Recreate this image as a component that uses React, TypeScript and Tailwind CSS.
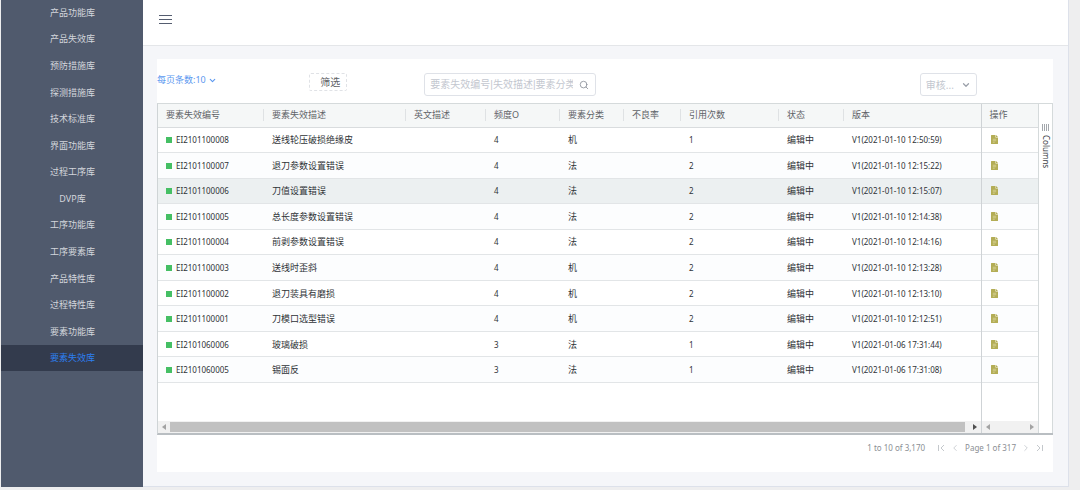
import { ChevronDown, ChevronLeft, ChevronRight, Search } from "lucide-react";

const menuItems = [
  "产品功能库",
  "产品失效库",
  "预防措施库",
  "探测措施库",
  "技术标准库",
  "界面功能库",
  "过程工序库",
  "DVP库",
  "工序功能库",
  "工序要素库",
  "产品特性库",
  "过程特性库",
  "要素功能库",
  "要素失效库",
];

const activeItem = "要素失效库";

const columns = [
  { title: "要素失效编号", width: "w-[106px]" },
  { title: "要素失效描述", width: "w-[142px]" },
  { title: "英文描述", width: "w-[80px]" },
  { title: "频度O", width: "w-[74px]" },
  { title: "要素分类", width: "w-[64px]" },
  { title: "不良率", width: "w-[57px]" },
  { title: "引用次数", width: "w-[98px]" },
  { title: "状态", width: "w-[65px]" },
  { title: "版本", width: "" },
];

const rows = [
  { id: "EI2101100008", desc: "送线轮压破损绝缘皮", freq: 4, type: "机", refs: 1, version: "V1(2021-01-10 12:50:59)" },
  { id: "EI2101100007", desc: "退刀参数设置错误", freq: 4, type: "法", refs: 2, version: "V1(2021-01-10 12:15:22)" },
  { id: "EI2101100006", desc: "刀值设置错误", freq: 4, type: "法", refs: 2, version: "V1(2021-01-10 12:15:07)", hover: true },
  { id: "EI2101100005", desc: "总长度参数设置错误", freq: 4, type: "法", refs: 2, version: "V1(2021-01-10 12:14:38)" },
  { id: "EI2101100004", desc: "前剥参数设置错误", freq: 4, type: "法", refs: 2, version: "V1(2021-01-10 12:14:16)" },
  { id: "EI2101100003", desc: "送线时歪斜", freq: 4, type: "机", refs: 2, version: "V1(2021-01-10 12:13:28)" },
  { id: "EI2101100002", desc: "退刀装具有磨损", freq: 4, type: "机", refs: 2, version: "V1(2021-01-10 12:13:10)" },
  { id: "EI2101100001", desc: "刀模口选型错误", freq: 4, type: "机", refs: 2, version: "V1(2021-01-10 12:12:51)" },
  { id: "EI2101060006", desc: "玻璃破损", freq: 3, type: "法", refs: 1, version: "V1(2021-01-06 17:31:44)" },
  { id: "EI2101060005", desc: "锡面反", freq: 3, type: "法", refs: 1, version: "V1(2021-01-06 17:31:08)" },
];

function DocIcon() {
  return (
    <svg viewBox="0 0 14 18" className="block h-[9px] w-[7px]">
      <path d="M1 0h8v5h5v12a1 1 0 0 1-1 1H1a1 1 0 0 1-1-1V1a1 1 0 0 1 1-1z" fill="#b3ad55" />
      <path d="M10 0l4 4h-4z" fill="#b3ad55" />
      <path d="M3.5 8.5h7M3.5 11.5h7M3.5 14.5h4" stroke="#e4e1ae" strokeWidth="1.2" />
    </svg>
  );
}

function Arrow({ dir, color }: { dir: "left" | "right"; color: string }) {
  return (
    <svg viewBox="0 0 4 6" className="h-[6px] w-1" fill={color}>
      <path d={dir === "left" ? "M4 0v6L0 3z" : "M0 0v6l4-3z"} />
    </svg>
  );
}

function Sidebar() {
  return (
    <aside className="w-[142px] shrink-0 bg-[#505a6d]">
      <nav className="-mt-px flex h-[372px] flex-col">
        {menuItems.map((item) => (
          <a
            key={item}
            href="#"
            className={
              item === activeItem
                ? "flex flex-1 items-center justify-center bg-[#333b4d] pt-px pl-px text-[#2d7ff0]"
                : "flex flex-1 items-center justify-center pt-px pl-px text-[#d3d6dc]"
            }
          >
            {item}
          </a>
        ))}
      </nav>
    </aside>
  );
}

function Toolbar() {
  return (
    <div className="grid h-[44px] grid-cols-[152fr_115fr_495fr_133fr] items-start pt-[14px]">
      <button className="flex h-[14px] items-center gap-[2px] justify-self-start text-[#5b98f0]">
        每页条数:10
        <ChevronDown size={9} strokeWidth={3} />
      </button>
      <button className="flex h-[18px] w-[38px] items-center justify-end justify-self-start rounded-[2px] border border-dashed border-[#e0e2e6] pr-[6px] text-[10px] text-[#606266]">
        筛选
      </button>
      <div className="flex h-[23px] w-[172px] items-center rounded-[3px] border border-[#dfe2e8] pl-[5px]">
        <input
          type="text"
          aria-label="搜索"
          placeholder="要素失效编号|失效描述|要素分类"
          className="w-[143px] font-['Liberation_Sans','Noto_Sans_CJK_SC',sans-serif] text-[10px] outline-none placeholder:text-[#c3c7cf]"
        />
        <button aria-label="搜索" className="ml-[6px] text-[#8a8f99]">
          <Search size={10} strokeWidth={2} />
        </button>
      </div>
      <div className="relative w-[57px]">
        <select
          aria-label="审核状态"
          className="h-[23px] w-full appearance-none rounded-[3px] border border-[#dfe2e8] bg-white pl-[5px] text-[10px] text-[#c3c7cf] outline-none"
        >
          <option>审核...</option>
        </select>
        <ChevronDown size={10} strokeWidth={3} className="pointer-events-none absolute right-[6px] top-[7px] text-[#9ba0aa]" />
      </div>
    </div>
  );
}

function DataTable() {
  return (
    <table className="h-[279px] w-full table-fixed border-collapse text-left">
      <thead className="bg-[#f5f7f7] text-[#5f6368]">
        <tr className="h-[23px] border-b border-[#d9dcde]">
          {columns.map(({ title, width }, i) => (
            <th key={title} className={`${width} p-0 font-normal`}>
              <div
                className={
                  i < columns.length - 1
                    ? "flex h-3 items-center border-r border-[#dfe2e4] pl-2"
                    : "flex h-3 items-center pl-2"
                }
              >
                {title}
              </div>
            </th>
          ))}
          <th className="w-[57px] border-l border-[#cfd3d6] p-0 pl-2 font-normal">操作</th>
        </tr>
      </thead>
      <tbody className="text-[#2f3337]">
        {rows.map((row) => (
          <tr
            key={row.id}
            className={
              row.hover
                ? "border-b border-[#e2e5e7] bg-[#ecf0f1]"
                : "border-b border-[#e2e5e7] even:bg-[#fcfdfe]"
            }
          >
            <td className="p-0 pt-px pl-2">
              <div className="flex items-center gap-1 text-[8px]">
                <span className="size-[6px] bg-[#45bf64]" />
                {row.id}
              </div>
            </td>
            <td className="p-0 pt-px pl-2">{row.desc}</td>
            <td />
            <td className="p-0 pt-px pl-2 text-[8px]">{row.freq}</td>
            <td className="p-0 pt-px pl-2">{row.type}</td>
            <td />
            <td className="p-0 pt-px pl-2 text-[8px]">{row.refs}</td>
            <td className="p-0 pt-px pl-2">编辑中</td>
            <td className="p-0 pt-px pl-2 text-[8px]">{row.version}</td>
            <td className="border-l border-[#cfd3d6] p-0 pl-[9px]">
              <button aria-label="查看" className="block">
                <DocIcon />
              </button>
            </td>
          </tr>
        ))}
      </tbody>
    </table>
  );
}

function Grid() {
  return (
    <div className="flex flex-1 border-t border-b-2 border-l border-t-[#d5dadb] border-b-[#b9bec2] border-l-[#cfd4d6]">
      <div className="flex min-w-0 flex-1 flex-col">
        <DataTable />
        <div className="flex flex-1">
          <div className="flex-1" />
          <div className="w-[57px] border-l border-[#cfd3d6]" />
        </div>
        <div className="flex h-[12px] bg-[#f1f1f1]">
          <div className="flex flex-1 items-center pr-1 pl-1">
            <Arrow dir="left" color="#a3a3a3" />
            <div className="mx-1 h-[10px] flex-1 bg-[#c1c1c1]" />
            <div className="pl-1">
              <Arrow dir="right" color="#505050" />
            </div>
          </div>
          <div className="flex w-[57px] items-center justify-between border-l border-[#cfd3d6] px-1">
            <Arrow dir="left" color="#a3a3a3" />
            <Arrow dir="right" color="#a3a3a3" />
          </div>
        </div>
      </div>
      <div className="w-[15px] border-x border-[#d5dadb] pt-5">
        <button className="flex w-full flex-col items-center gap-1 text-[#3c4046]">
          <svg viewBox="0 0 8 7" className="h-[7px] w-2" stroke="#a3a7ac" strokeWidth="1">
            <path d="M.5 0v7M2.5 0v7M4.5 0v7M6.5 0v7" />
          </svg>
          <span className="text-[8px] [writing-mode:vertical-rl]">Columns</span>
        </button>
      </div>
    </div>
  );
}

function Pagination() {
  return (
    <div className="flex h-[37px] items-start justify-end pt-[7px] pr-[9px] text-[8px] text-[#8b8f94]">
      <span className="mr-3">1 to 10 of 3,170</span>
      <div className="flex items-center gap-[5px]">
        <button aria-label="第一页" className="flex h-3 items-center text-[#c4c8cc]">
          <svg viewBox="0 0 8 8" className="size-2" fill="none" stroke="currentColor">
            <path d="M1.5 1v6M7 1L4 4l3 3" />
          </svg>
        </button>
        <button aria-label="上一页" className="text-[#c4c8cc]">
          <ChevronLeft size={10} strokeWidth={2} />
        </button>
        <span>Page 1 of 317</span>
        <button aria-label="下一页" className="text-[#c4c8cc]">
          <ChevronRight size={10} strokeWidth={2} />
        </button>
        <button aria-label="最后一页" className="text-[#c4c8cc]">
          <svg viewBox="0 0 8 8" className="size-2" fill="none" stroke="currentColor">
            <path d="M1 1l3 3-3 3M6.5 1v6" />
          </svg>
        </button>
      </div>
    </div>
  );
}

export default function App() {
  return (
    <div className="flex min-h-screen bg-[#eeeeef] pr-[11px] pb-[3px] pl-px font-['Noto_Sans','Noto_Sans_CJK_SC',sans-serif] text-[9px] leading-3">
      <Sidebar />
      <div className="flex min-w-0 flex-1 flex-col border-r border-b border-[#dde1ea] bg-[#f5f6f9]">
        <header className="flex h-[46px] items-center border-b border-[#e4e6e9] bg-white px-4 pb-[6px]">
          <button aria-label="菜单" className="flex w-[13px] flex-col gap-[3px]">
            <span className="h-px w-full bg-[#555d70]" />
            <span className="h-px w-full bg-[#555d70]" />
            <span className="h-px w-full bg-[#555d70]" />
          </button>
        </header>
        <main className="flex flex-1 flex-col pt-[13px] pr-[15px] pb-[14px] pl-[14px]">
          <section className="flex flex-1 flex-col bg-white">
            <Toolbar />
            <Grid />
            <Pagination />
          </section>
        </main>
      </div>
    </div>
  );
}
